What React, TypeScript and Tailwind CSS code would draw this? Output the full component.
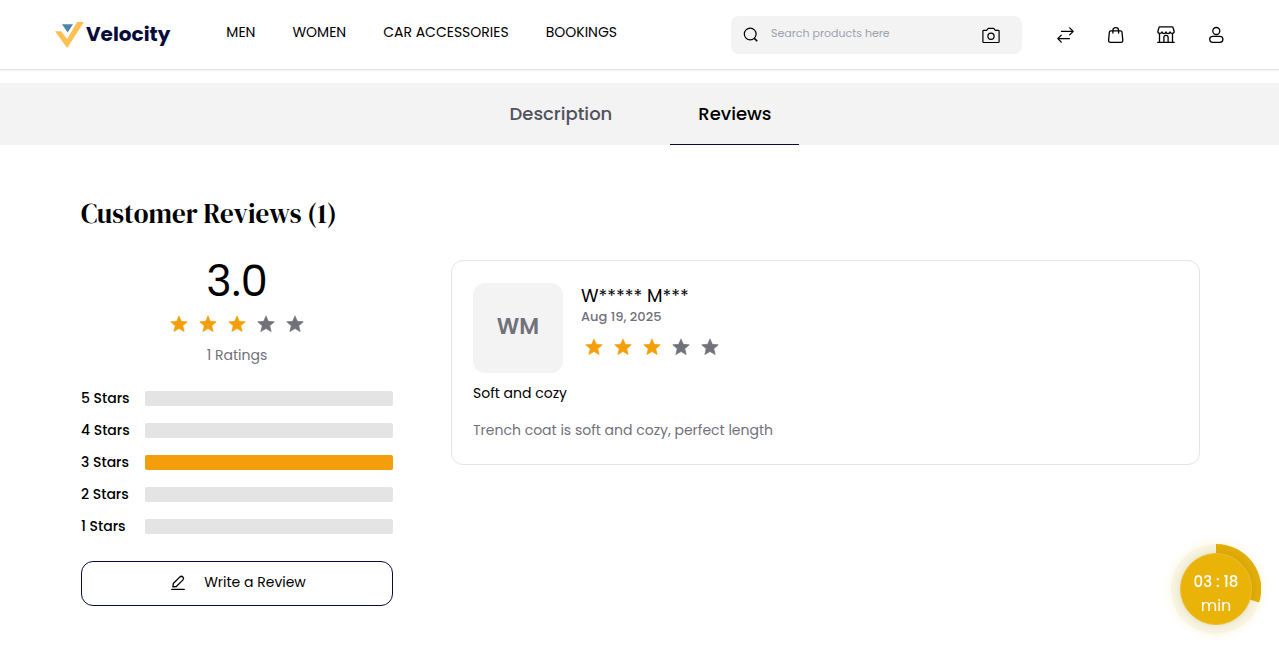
import React from "react";

const NAV_LINKS = ["MEN", "WOMEN", "CAR ACCESSORIES", "BOOKINGS"];

const RATING_ROWS = [
  { stars: 5, percent: 0 },
  { stars: 4, percent: 0 },
  { stars: 3, percent: 100 },
  { stars: 2, percent: 0 },
  { stars: 1, percent: 0 },
];

function Icon({ children, size = 20 }: { children: React.ReactNode; size?: number }) {
  return (
    <svg
      width={size}
      height={size}
      viewBox="0 0 20 20"
      fill="none"
      stroke="currentColor"
      strokeWidth="1.3"
      strokeLinecap="round"
      strokeLinejoin="round"
      aria-hidden="true"
    >
      {children}
    </svg>
  );
}

function Logo() {
  return (
    <a href="#home" className="flex items-center gap-[2px]" aria-label="Velocity">
      <svg width="29" height="26" viewBox="0 0 29 26" aria-hidden="true">
        <path d="M0 9.2h6.2l6 8L22 0h7L12.2 26z" fill="#fdc151" />
        <path d="M7 2.2h11l-5.4 8.4z" fill="#4c86a8" />
      </svg>
      <span className="pb-[2px] text-[20px] leading-7 font-bold text-[#060c3b]">Velocity</span>
    </a>
  );
}

function Stars({ value }: { value: number }) {
  return (
    <div className="flex gap-[9px]" role="img" aria-label={`${value} out of 5 stars`}>
      {[1, 2, 3, 4, 5].map((n) => (
        <svg
          key={n}
          width="20"
          height="20"
          viewBox="0 0 24 24"
          className={n <= value ? "fill-[#f59e0b] stroke-[#f59e0b]" : "fill-[#71717a] stroke-[#71717a]"}
        >
          <path
            d="M12 2.300l2.800 6.500 7.100.600-5.400 4.700 1.700 7L12 17.400l-6.200 3.700 1.700-7-5.400-4.700 7.100-.600z"
            strokeWidth="0.8"
            strokeLinejoin="round"
          />
        </svg>
      ))}
    </div>
  );
}

function Header() {
  return (
    <header className="flex h-[70px] items-center border-b border-[#e3e3e3] pr-[53px] pl-[55px] shadow-[0_1px_2px_rgba(0,0,0,0.06)]">
      <Logo />
      <nav className="ml-14 flex gap-[37px] pb-[5px] text-sm leading-6 whitespace-nowrap">
        {NAV_LINKS.map((label) => (
          <a key={label} href="#category">
            {label}
          </a>
        ))}
      </nav>
      <form className="ml-auto flex h-[38px] w-[291px] items-center rounded-lg bg-[#f3f3f3] pr-[21px] pl-[10px]">
        <label htmlFor="search" aria-label="Search">
          <Icon>
            <circle cx="9.2" cy="9" r="5.900" strokeWidth="1.2" />
            <path d="M13.6 13.6l2.2 2.2" strokeWidth="1.6" />
          </Icon>
        </label>
        <input
          id="search"
          type="text"
          placeholder="Search products here"
          className="ml-[10px] min-w-0 flex-1 bg-transparent pb-1 text-[11px] leading-4 outline-none placeholder:text-[#9ca3af]"
        />
        <button type="button" aria-label="Search by image">
          <Icon>
            <path
              d="M2.7 5.400h2.900l1.700-2.100h5.400l1.700 2.100h2.900c.5 0 .8.3.8.8v10.500c0 .5-.3.8-.8.8H2.7c-.5 0-.8-.3-.8-.8V6.200c0-.5.3-.8.8-.8z"
              strokeWidth="1.2"
            />
            <circle cx="10" cy="11.200" r="3.100" strokeWidth="1.2" />
          </Icon>
        </button>
      </form>
      <div className="ml-[34px] flex gap-[30px]">
        <button type="button" aria-label="Compare">
          <Icon>
            <path d="M5.500 6.400h11.500M13.700 2.900l3.500 3.500-3.500 3.500M13.500 13.600H2M5.300 10.100l-3.500 3.500 3.500 3.500" />
          </Icon>
        </button>
        <button type="button" aria-label="Shopping cart">
          <Icon>
            <path d="M4.800 5.800h9.800c.8 0 1.300.4 1.400 1.200l.8 8.400c0 1.100-.6 1.900-1.700 1.900H4.300c-1.100 0-1.700-.8-1.700-1.900L3.400 7c.1-.8.600-1.200 1.400-1.200zM6.900 8V5.300c0-3.600 5.700-3.600 5.700 0V8" />
          </Icon>
        </button>
        <button type="button" aria-label="Stores">
          <Icon>
            <path d="M1.700 17.300h16.600M3.500 17V8.400M16.500 17V8.400M3.800 1.900h12.400c.5 0 .8.300.9.800l1 3.500c.2 2.700-3.500 3-4.100.7-.4 2.200-3.700 2.200-4 0-.3 2.200-3.600 2.200-4 0-.6 2.300-4.300 2-4.100-.7l1-3.500c.1-.5.400-.8.900-.8zM7.900 17v-4.700c0-2.500 4.200-2.500 4.200 0V17" />
          </Icon>
        </button>
        <button type="button" aria-label="Profile">
          <Icon>
            <circle cx="10.300" cy="6" r="3.500" />
            <rect x="3.700" y="11.300" width="13.200" height="6" rx="3" />
          </Icon>
        </button>
      </div>
    </header>
  );
}

function Tabs() {
  return (
    <div
      role="tablist"
      className="mt-[13px] flex h-[62px] justify-center gap-[30px] bg-[#f3f3f3] pl-[2px] text-lg font-medium"
    >
      <button type="button" role="tab" aria-selected="false" className="border-b border-transparent px-7 text-[#52525b]">
        Description
      </button>
      <button type="button" role="tab" aria-selected="true" className="border-b border-[#060c3b] px-7 text-black">
        Reviews
      </button>
    </div>
  );
}

function RatingSummary() {
  return (
    <section aria-label="Rating summary">
      <div className="flex flex-col items-center">
        <p className="pt-px text-[43px] leading-10">3.0</p>
        <div className="mt-[13px]">
          <Stars value={3} />
        </div>
        <p className="mt-[9px] text-sm leading-6 text-[#71717a]">1 Ratings</p>
      </div>
      <div className="mt-[19px] flex flex-col gap-2">
        {RATING_ROWS.map(({ stars, percent }) => (
          <div key={stars} className="flex h-6 items-center">
            <span className="w-16 text-sm font-medium">{stars} Stars</span>
            <div className="h-[15px] flex-1 overflow-hidden rounded-xs bg-[#e4e4e4]">
              <div className="h-full bg-[#f59e0b]" style={{ width: `${percent}%` }} />
            </div>
          </div>
        ))}
      </div>
      <button
        type="button"
        className="mt-[23px] flex h-[45px] w-full items-center justify-center gap-4 rounded-xl border border-[#060c3b] pb-[3px] text-sm"
      >
        <Icon>
          <path d="M3.700 17.300h12.600M4.900 14.800l.400-3.300 6.600-6.600c2-1.800 4.800.900 3.100 3l-6.700 6.600z" />
        </Icon>
        Write a Review
      </button>
    </section>
  );
}

function ReviewCard() {
  return (
    <article className="self-start rounded-xl border border-[#e4e4e7] px-[21px] pt-[22px] pb-[22px]">
      <div className="flex gap-[18px]">
        <div className="flex size-[90px] items-center justify-center rounded-xl bg-[#f3f3f3] pb-[3px] text-[22px] font-semibold text-[#71717a]">
          WM
        </div>
        <div>
          <p className="text-lg leading-[26px]">W***** M***</p>
          <p className="text-[13px] leading-4 font-medium text-[#71717a]">Aug 19, 2025</p>
          <div className="mt-3 ml-[3px]">
            <Stars value={3} />
          </div>
        </div>
      </div>
      <p className="mt-2 text-sm leading-6">Soft and cozy</p>
      <p className="mt-[13px] text-sm leading-6 text-[#71717a]">Trench coat is soft and cozy, perfect length</p>
    </article>
  );
}

function Countdown() {
  return (
    <div className="fixed right-[18px] bottom-[19px] grid size-[90px] place-items-center rounded-full shadow-[0_0_10px_rgba(234,179,8,0.16)]">
      <svg viewBox="0 0 90 90" className="col-start-1 row-start-1 size-[90px]" aria-hidden="true">
        <circle cx="45" cy="45" r="45" fill="#f8f5e2" />
        <path d="M45 45V0A45 45 0 0 1 88.200 58.500z" fill="#e4ae09" />
      </svg>
      <div className="col-start-1 row-start-1 flex size-[72px] flex-col items-center justify-center rounded-full border border-[#efbd2e] bg-[#eab308] pt-[10px] text-base leading-6 text-white shadow-[0_0_10px_rgba(90,70,0,0.15)]">
        <span className="text-[15px] leading-6 font-medium">03 : 18</span>
        <span>min</span>
      </div>
    </div>
  );
}

export default function App() {
  return (
    <div className="bg-white font-[Poppins,Inter,sans-serif] text-black">
      <Header />
      <Tabs />
      <main className="pt-[51px] pr-[79px] pb-12 pl-[81px]">
        <h1 className="font-['DM_Serif_Display','Liberation_Serif',serif] text-[27px] leading-9 font-normal">
          Customer Reviews (1)
        </h1>
        <div className="mt-7 grid grid-cols-[312px_1fr] gap-[58px]">
          <RatingSummary />
          <ReviewCard />
        </div>
      </main>
      <Countdown />
    </div>
  );
}
